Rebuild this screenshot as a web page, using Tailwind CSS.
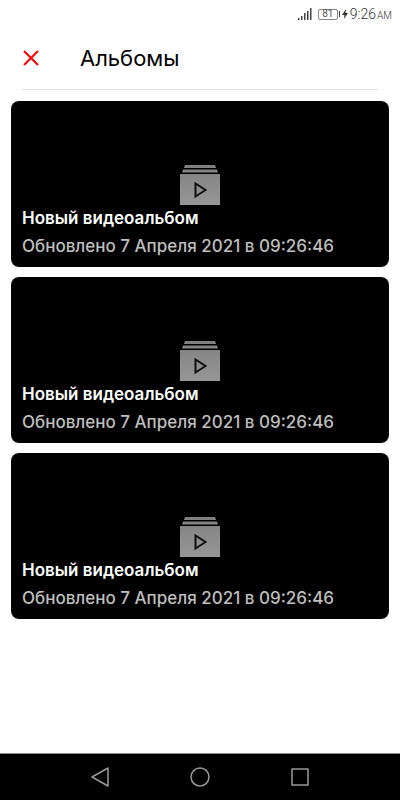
<!DOCTYPE html>
<html lang="ru">
<head>
  <meta charset="UTF-8" />
  <meta name="viewport" content="width=device-width, initial-scale=1" />
  <title>Альбомы</title>
  <script src="https://cdn.jsdelivr.net/npm/@tailwindcss/browser@4"></script>
</head>
<body class="min-h-screen flex flex-col bg-white font-[Inter,sans-serif] text-black">

  <!-- Shared gradient for the album icons -->
  <svg class="absolute h-0 w-0" aria-hidden="true">
    <linearGradient id="stack" x1="0" y1="0" x2="0" y2="1">
      <stop offset="0" stop-color="#808080" />
      <stop offset="1" stop-color="#969696" />
    </linearGradient>
  </svg>

  <!-- Status bar -->
  <div class="flex h-7 items-center justify-end pr-2 text-[#555] font-[Roboto,sans-serif]">
    <svg class="mr-1.5 h-3 w-3.5" viewBox="0 0 14 12" fill="#444">
      <path d="M0 10h1.500v2H0zM3 8h1.500v4H3zM6 5h1.500v7H6zM9 3h1.500v9H9zM12 0h1.500v12H12z" />
    </svg>
    <span class="flex h-[11px] w-5 items-center justify-center rounded-xs border border-[#888] text-[10px] leading-none">81</span>
    <span class="ml-px h-1.5 w-px bg-[#444]"></span>
    <svg class="mr-0.5 ml-0.5 h-2.5 w-1.5" viewBox="0 0 6 10" fill="#333">
      <path d="M4 0 0 6h2.500L2 10l4-6H3.500z" />
    </svg>
    <span class="flex items-baseline gap-px text-sm font-light text-[#333]">
      <span>9:26</span>
      <span class="text-[10px]">AM</span>
    </span>
  </div>

  <!-- Header -->
  <header class="mx-[22px] flex h-[62px] items-center gap-10 border-b border-[#dcdcdc] pb-0.5">
    <button aria-label="Закрыть" class="h-[18px] w-[18px]">
      <svg class="h-[18px] w-[18px]" viewBox="0 0 18 18" fill="none" stroke="#ff0000" stroke-width="2">
        <path d="M2 2l14 14M16 2 2 16" />
      </svg>
    </button>
    <h1 class="text-[22px] leading-7">Альбомы</h1>
  </header>

  <!-- Albums -->
  <main class="flex flex-1 flex-col gap-2.5 px-[11px] pt-[11px] pb-4">
    <a href="#" class="relative flex h-[166px] flex-col justify-end rounded-lg bg-black px-[11px] pb-[7px] text-[17px] leading-7 font-medium">
      <svg class="absolute top-16 left-1/2 h-10 w-10 -translate-x-1/2" viewBox="0 0 40 40">
        <path d="M5 0h30l1 3H4zM3 4.500h34l1 3H2zM0 9h40v31H0z" fill="url(#stack)" />
        <path d="M15.500 18.500v13l10-6.500z" fill="none" stroke="#111" stroke-width="2" />
      </svg>
      <span class="relative font-semibold text-white">Новый видеоальбом</span>
      <span class="relative text-[#bebebe]">Обновлено 7 Апреля 2021 в 09:26:46</span>
    </a>
    <a href="#" class="relative flex h-[166px] flex-col justify-end rounded-lg bg-black px-[11px] pb-[7px] text-[17px] leading-7 font-medium">
      <svg class="absolute top-16 left-1/2 h-10 w-10 -translate-x-1/2" viewBox="0 0 40 40">
        <path d="M5 0h30l1 3H4zM3 4.500h34l1 3H2zM0 9h40v31H0z" fill="url(#stack)" />
        <path d="M15.500 18.500v13l10-6.500z" fill="none" stroke="#111" stroke-width="2" />
      </svg>
      <span class="relative font-semibold text-white">Новый видеоальбом</span>
      <span class="relative text-[#bebebe]">Обновлено 7 Апреля 2021 в 09:26:46</span>
    </a>
    <a href="#" class="relative flex h-[166px] flex-col justify-end rounded-lg bg-black px-[11px] pb-[7px] text-[17px] leading-7 font-medium">
      <svg class="absolute top-16 left-1/2 h-10 w-10 -translate-x-1/2" viewBox="0 0 40 40">
        <path d="M5 0h30l1 3H4zM3 4.500h34l1 3H2zM0 9h40v31H0z" fill="url(#stack)" />
        <path d="M15.500 18.500v13l10-6.500z" fill="none" stroke="#111" stroke-width="2" />
      </svg>
      <span class="relative font-semibold text-white">Новый видеоальбом</span>
      <span class="relative text-[#bebebe]">Обновлено 7 Апреля 2021 в 09:26:46</span>
    </a>
  </main>

  <!-- Navigation bar -->
  <nav class="flex h-[47px] items-center justify-center gap-20 border-t border-[#888] bg-black">
    <button aria-label="Назад" class="h-5 w-5">
      <svg class="h-5 w-5" viewBox="0 0 20 20" fill="none" stroke="#999" stroke-width="1.500" stroke-linejoin="round">
        <path d="M18 1v18L2 10z" />
      </svg>
    </button>
    <button aria-label="Домой" class="h-5 w-5">
      <svg class="h-5 w-5" viewBox="0 0 20 20" fill="none" stroke="#999" stroke-width="1.500">
        <circle cx="10" cy="10" r="9" />
      </svg>
    </button>
    <button aria-label="Недавние" class="h-5 w-5">
      <svg class="h-5 w-5" viewBox="0 0 20 20" fill="none" stroke="#999" stroke-width="1.500" stroke-linejoin="round">
        <path d="M2 2h16v16H2z" />
      </svg>
    </button>
  </nav>

</body>
</html>
